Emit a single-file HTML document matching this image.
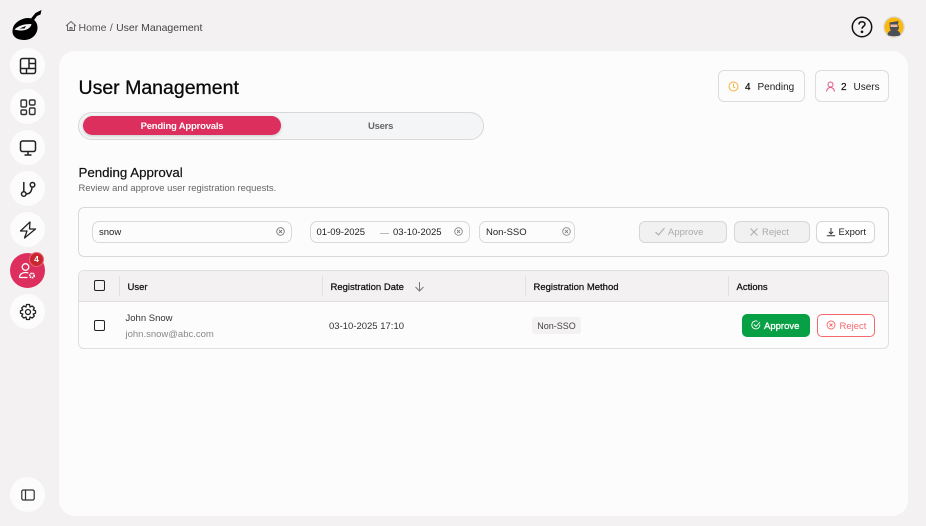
<!DOCTYPE html>
<html lang="en">
<head>
<meta charset="utf-8">
<title>User Management</title>
<style>
*{box-sizing:border-box;margin:0;padding:0}
html,body{width:926px;height:526px;overflow:hidden}
body{position:relative;background:#f3f1f2;font-family:"Liberation Sans",sans-serif;color:#111}
.a{position:absolute;white-space:nowrap}
.c{position:absolute;left:10px;width:35px;height:35px;border-radius:50%;background:#fcfcfc;display:flex;align-items:center;justify-content:center}
.c svg{display:block}
.panel{position:absolute;left:59px;top:51px;width:849px;height:465px;background:#fcfcfc;border-radius:16px}
.box{position:absolute;border:1px solid #d9d9d9;border-radius:6px}
.t{position:absolute;white-space:nowrap;line-height:14px}
.btn{position:absolute;top:221px;height:22px;border-radius:6px;border:1px solid #d6d6d6}
.dis{background:#f1f1f1}
.hd{font-size:9.5px;font-weight:400;color:#111;-webkit-text-stroke:.25px #111}
.div{position:absolute;top:276px;width:1px;height:20px;background:#e2e0e1}
.cb{position:absolute;left:94px;width:11px;height:11px;border:1.5px solid #222;border-radius:2px;background:#fcfcfc}
</style>
</head>
<body>
<svg class="a" style="left:11px;top:9px" width="32" height="33" viewBox="0 0 32 33">
<path d="M30.500 1 L24.500 4 L20 9.500 L23 11 L26 7 L29.500 5.500 Z" fill="#000"/>
<path d="M13 9.500 C20 7.500 26.500 11 26.500 18.500 C26.500 26 20 31.500 12 31 C5 30.500 1 27 1.500 21.500 C2 15 7 11.500 13 9.500 Z" fill="#000"/>
<path d="M3.500 20.500 C7.500 16.500 13 15 20.500 15 C20 18.800 15.500 21.500 10.500 21.500 C8 21.500 5.500 21.200 3.500 20.500 Z" fill="#f3f1f2"/>
<path d="M8.500 19.500 L15 17 L13.500 19.500 Z" fill="#000"/>
</svg>

<div class="c" style="top:48px"><svg width="18" height="18" viewBox="0 0 18 18" fill="none" stroke="#222" stroke-width="1.500"><rect x="1.500" y="1.500" width="15" height="15" rx="2"/><path d="M1.500 11.500H16.500M7.500 11.500V16.500M10 1.500V11.500M10 6.500H16.500"/></svg></div>
<div class="c" style="top:89px"><svg width="18" height="18" viewBox="0 0 18 18" fill="none" stroke="#333" stroke-width="1.400"><rect x="2" y="2" width="5.500" height="7" rx="1.200"/><rect x="10.500" y="2" width="5.500" height="5" rx="1.200"/><rect x="2" y="12" width="5.500" height="4.500" rx="1.200"/><rect x="10.500" y="10" width="5.500" height="6.500" rx="1.200"/></svg></div>
<div class="c" style="top:130px"><svg width="18" height="18" viewBox="0 0 18 18" fill="none" stroke="#222" stroke-width="1.500"><rect x="1.500" y="2" width="15" height="10.500" rx="2"/><path d="M9 12.500V16M5.500 16H12.500"/></svg></div>
<div class="c" style="top:171px"><svg width="18" height="18" viewBox="0 0 18 18" fill="none" stroke="#222" stroke-width="1.500"><circle cx="4.800" cy="14" r="2.300"/><circle cx="13.500" cy="4.800" r="2.300"/><path d="M4.800 11.700V2M7 14C11 14 12.700 11 13 7.200"/></svg></div>
<div class="c" style="top:212px"><svg width="18" height="18" viewBox="0 0 18 18" fill="none" stroke="#222" stroke-width="1.300" stroke-linejoin="round"><path d="M11 1L1.500 10H8L5.500 17L16.500 8H10.500Z"/></svg></div>
<div class="c" style="top:253px;background:#dc2f5d"><svg width="20" height="20" viewBox="0 0 20 20" fill="none" stroke="#fff" stroke-width="1.300" style="margin-left:1px;margin-top:1px"><circle cx="7.500" cy="6" r="3.300"/><path d="M1.500 16.500C1.500 13 4.500 11.500 7.500 11.500C8.500 11.500 9.500 11.700 10.300 12M1.500 16.500H9.500"/><circle cx="14" cy="14.500" r="2.200" stroke-width="1.700" stroke-dasharray="1.500 .6"/></svg></div>
<div class="a" style="left:29px;top:252px;width:15px;height:15px;border-radius:50%;background:#c9272f;border:1px solid #e86a78;color:#fff;font-size:8.500px;font-weight:700;text-align:center;line-height:13px">4</div>
<div class="c" style="top:294px"><svg width="18" height="18" viewBox="0 0 18 18" fill="none" stroke="#222" stroke-width="1.300" stroke-linejoin="round"><circle cx="9" cy="9" r="2.500"/><path d="M7.500 1.500H10.500L11 4L13.200 2.900L15.300 5L14.200 7L16.500 7.700V10.300L14.200 11L15.300 13L13.200 15.100L11 14L10.500 16.500H7.500L7 14L4.800 15.100L2.700 13L3.800 11L1.500 10.300V7.700L3.800 7L2.700 5L4.800 2.900L7 4Z"/></svg></div>
<div class="c" style="top:477px"><svg width="14" height="12" viewBox="0 0 14 12" fill="none" stroke="#333" stroke-width="1.200"><rect x=".8" y="1" width="12.400" height="10" rx="1.500"/><path d="M4.500 1V11"/></svg></div>

<svg class="a" style="left:65px;top:20px" width="12" height="12" viewBox="0 0 12 12" fill="none" stroke="#666" stroke-width="1"><path d="M1 6L6 1.500L11 6M2.500 5V10.500H9.500V5M5 10.500V7.500H7V10.500"/></svg>
<div class="t" style="left:78.500px;top:21px;font-size:10.500px;color:#555;word-spacing:.4px">Home / <span style="color:#444;word-spacing:0">User Management</span></div>

<svg class="a" style="left:851px;top:16px" width="22" height="22" viewBox="0 0 22 22" fill="none" stroke="#111" stroke-width="1.500"><circle cx="11" cy="11" r="9.700"/><path d="M8 8.500C8 6.700 9.300 5.800 11 5.800C12.800 5.800 14 6.800 14 8.300C14 10.300 11 10.500 11 12.800"/><circle cx="11" cy="15.800" r=".6" fill="#111"/></svg>
<svg class="a" style="left:883px;top:16px" width="22" height="22" viewBox="0 0 22 22"><circle cx="11" cy="11" r="10.800" fill="#d9d9d9"/><circle cx="11" cy="11" r="9.500" fill="#fbb80e"/><path d="M4.500 19C5 15 8 14 11 14C14 14 17 15 17.500 19C15.500 20.500 7 20.500 4.500 19Z" fill="#4b4f56"/><path d="M6.500 6.500L15.500 5L15 8L16 12C15 15 13 15.500 11 15.500C8.500 15.500 7 14 6.800 12Z" fill="#4b4f56"/><rect x="7.500" y="8.500" width="7" height="2.500" fill="#f0b9a0"/></svg>

<div class="panel"></div>
<div class="t" style="left:78.500px;top:77px;font-size:19.500px;line-height:22px;color:#0b0b0b;-webkit-text-stroke:.3px #0b0b0b">User Management</div>

<div class="box" style="left:718px;top:70px;width:87px;height:32px;border-color:#dcdcdc"></div>
<svg class="a" style="left:728px;top:81px" width="11" height="11" viewBox="0 0 11 11" fill="none" stroke="#f5b13d" stroke-width="1"><circle cx="5.500" cy="5.500" r="4.500"/><path d="M5.500 2.700V5.800L7.300 7"/></svg>
<div class="t" style="left:745px;top:81px;font-size:10px;color:#111;-webkit-text-stroke:.2px #111">4</div>
<div class="t" style="left:757.500px;top:81px;font-size:10px;color:#222">Pending</div>
<div class="box" style="left:815px;top:70px;width:74px;height:32px;border-color:#dcdcdc"></div>
<svg class="a" style="left:825px;top:81px" width="11" height="11" viewBox="0 0 11 11" fill="none" stroke="#e0567c" stroke-width="1"><circle cx="5.500" cy="3.500" r="2.500"/><path d="M1.500 10.500C2 8 3.500 6.500 5.500 6.500C7.500 6.500 9 8 9.500 10.500"/></svg>
<div class="t" style="left:841px;top:81px;font-size:10px;color:#111;-webkit-text-stroke:.2px #111">2</div>
<div class="t" style="left:853.500px;top:81px;font-size:10px;color:#222">Users</div>

<div class="a" style="left:78px;top:112px;width:406px;height:28px;border-radius:14px;background:#f4f5f7;border:1px solid #d8d8d8"></div>
<div class="a" style="left:83px;top:116px;width:198px;height:19px;border-radius:10px;background:#dc2f5d;box-shadow:0 1px 3px rgba(0,0,0,.18);color:#fff;font-size:9.500px;font-weight:700;text-align:center;line-height:21px;letter-spacing:-.2px">Pending Approvals</div>
<div class="t" style="left:368px;top:120px;font-size:9.500px;font-weight:700;color:#666;letter-spacing:-.25px">Users</div>

<div class="t" style="left:78.500px;top:165px;font-size:13.300px;line-height:16px;color:#111;-webkit-text-stroke:.2px #111">Pending Approval</div>
<div class="t" style="left:78.500px;top:182px;font-size:9.450px;color:#666">Review and approve user registration requests.</div>

<div class="box" style="left:78px;top:207px;width:811px;height:50px"></div>

<div class="box" style="left:92px;top:221px;width:200px;height:22px;border-radius:7px"></div>
<div class="t" style="left:99px;top:226px;font-size:9.500px;color:#222">snow</div>
<svg class="a" style="left:275.500px;top:226.500px" width="9" height="9" viewBox="0 0 9 9" fill="none" stroke="#777" stroke-width=".9"><circle cx="4.500" cy="4.500" r="3.800"/><path d="M3 3L6 6M6 3L3 6"/></svg>

<div class="box" style="left:310px;top:221px;width:160px;height:22px;border-radius:7px"></div>
<div class="t" style="left:316.500px;top:226px;font-size:9.500px;color:#222">01-09-2025</div>
<div class="a" style="left:380px;top:232.500px;width:9px;height:1px;background:#bbb"></div>
<div class="t" style="left:393px;top:226px;font-size:9.500px;color:#222">03-10-2025</div>
<svg class="a" style="left:454px;top:226.500px" width="9" height="9" viewBox="0 0 9 9" fill="none" stroke="#888" stroke-width=".9"><circle cx="4.500" cy="4.500" r="3.800"/><path d="M3 3L6 6M6 3L3 6"/></svg>

<div class="box" style="left:479px;top:221px;width:96px;height:22px;border-radius:7px"></div>
<div class="t" style="left:486px;top:226px;font-size:9.500px;color:#222">Non-SSO</div>
<svg class="a" style="left:561.500px;top:227px" width="9" height="9" viewBox="0 0 9 9" fill="none" stroke="#888" stroke-width=".9"><circle cx="4.500" cy="4.500" r="3.800"/><path d="M3 3L6 6M6 3L3 6"/></svg>

<div class="btn dis" style="left:639px;width:88px"></div>
<svg class="a" style="left:654px;top:226px" width="12" height="11" viewBox="0 0 12 11" fill="none" stroke="#aaa" stroke-width="1"><path d="M1.500 6L4.500 9L10.500 2"/></svg>
<div class="t" style="left:668px;top:226px;font-size:9.500px;color:#aaa">Approve</div>
<div class="btn dis" style="left:734px;width:76px"></div>
<svg class="a" style="left:749px;top:227px" width="10" height="10" viewBox="0 0 10 10" fill="none" stroke="#aaa" stroke-width="1"><path d="M1.500 1.500L8.500 8.500M8.500 1.500L1.500 8.500"/></svg>
<div class="t" style="left:762px;top:226px;font-size:9.500px;color:#aaa">Reject</div>
<div class="btn" style="left:816px;width:59px;background:#fff;box-shadow:0 1px 1px rgba(0,0,0,.04)"></div>
<svg class="a" style="left:826px;top:226.500px" width="10" height="10" viewBox="0 0 10 10" fill="none" stroke="#333" stroke-width="1"><path d="M5 1V6.800M2.800 4.800L5 7L7.200 4.800M.8 8.800H9.200"/></svg>
<div class="t" style="left:838.500px;top:226px;font-size:9.500px;color:#222">Export</div>

<div class="a" style="left:78px;top:270px;width:811px;height:79px;border:1px solid #dfdfdf;border-radius:6px;overflow:hidden;background:#fcfcfc"><div style="height:31px;background:#f3f1f2;border-bottom:1px solid #dfdfdf"></div></div>
<div class="div" style="left:119px"></div>
<div class="div" style="left:322px"></div>
<div class="div" style="left:525px"></div>
<div class="div" style="left:728px"></div>
<div class="cb" style="top:280px;background:#f3f1f2"></div>
<div class="t hd" style="left:127.500px;top:281px">User</div>
<div class="t hd" style="left:330.500px;top:281px">Registration Date</div>
<svg class="a" style="left:414px;top:281px" width="11" height="11" viewBox="0 0 11 11" fill="none" stroke="#777" stroke-width="1"><path d="M5.500 1V10M1.500 6L5.500 10L9.500 6"/></svg>
<div class="t hd" style="left:533.500px;top:281px">Registration Method</div>
<div class="t hd" style="left:736.500px;top:281px">Actions</div>

<div class="cb" style="top:320px"></div>
<div class="t" style="left:125.500px;top:312px;font-size:9.500px;color:#333">John Snow</div>
<div class="t" style="left:125.500px;top:328px;font-size:9.500px;color:#888">john.snow@abc.com</div>
<div class="t" style="left:329px;top:320px;font-size:9.500px;color:#333">03-10-2025 17:10</div>
<div class="a" style="left:532px;top:317px;width:49px;height:17px;border-radius:3px;background:#f3f1f2;font-size:9px;color:#444;text-align:center;line-height:18px">Non-SSO</div>

<div class="a" style="left:742px;top:314px;width:68px;height:23px;border-radius:5px;background:#08a045"></div>
<svg class="a" style="left:751px;top:320px" width="10" height="10" viewBox="0 0 10 10" fill="none" stroke="#fff" stroke-width=".9"><path d="M8.800 4.500A4 4 0 1 1 6.500 1.300"/><path d="M3 4.500L5 6.500L9 2"/></svg>
<div class="t" style="left:764px;top:320px;font-size:9.500px;color:#fff;-webkit-text-stroke:.3px #fff">Approve</div>
<div class="a" style="left:817px;top:314px;width:58px;height:23px;border-radius:5px;border:1px solid #f4686e;background:#fff"></div>
<svg class="a" style="left:825.500px;top:320px" width="10" height="10" viewBox="0 0 10 10" fill="none" stroke="#f4686e" stroke-width=".9"><circle cx="5" cy="5" r="4"/><path d="M3.500 3.500L6.500 6.500M6.500 3.500L3.500 6.500"/></svg>
<div class="t" style="left:839.500px;top:320px;font-size:9.500px;color:#f4686e">Reject</div>
</body>
</html>
